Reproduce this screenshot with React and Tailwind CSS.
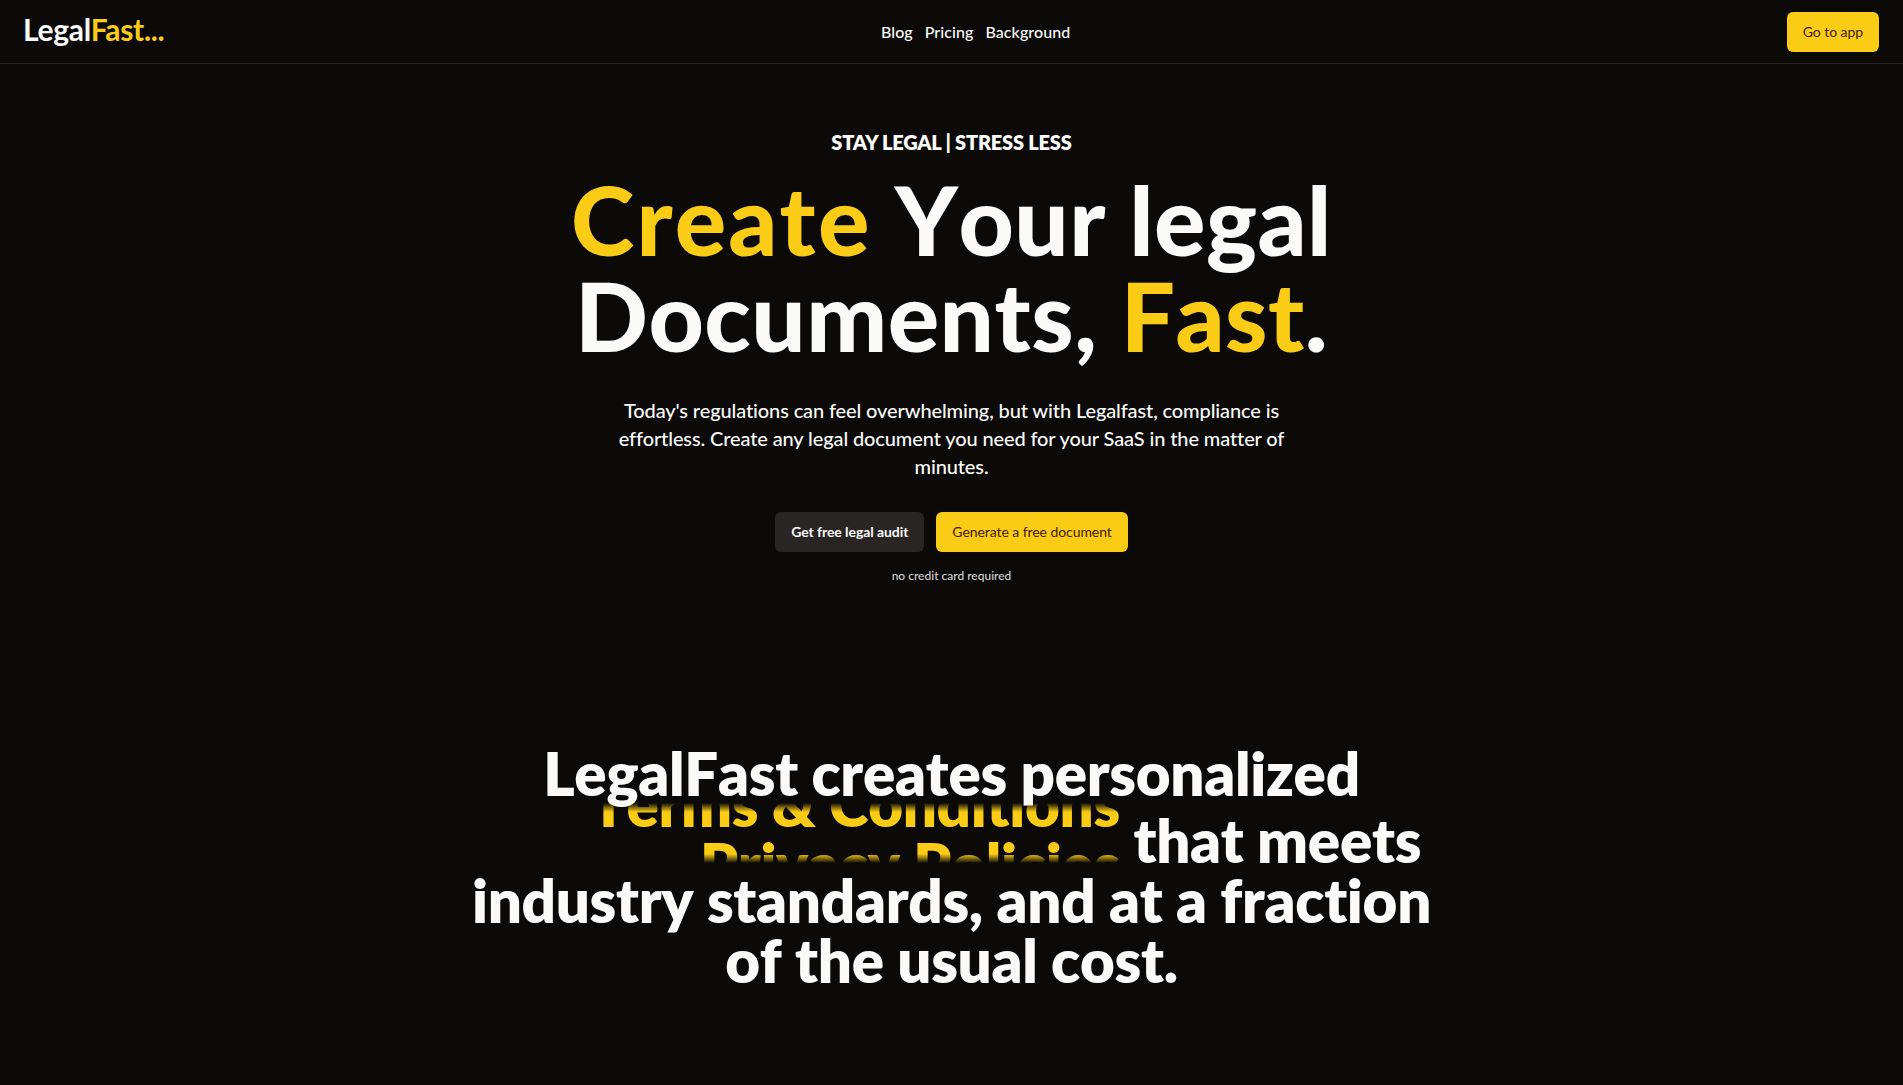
export default function App() {
  return (
    <div className="min-h-screen bg-[#0c0a09] text-[#fafaf9] font-['Lato','Noto_Sans',sans-serif] [font-variant-ligatures:none]">
      <header className="flex h-16 items-center justify-between border-b border-[#292524] pl-[23px] pr-6">
        <a className="-mt-1.5 text-3xl leading-8 font-bold tracking-[-0.01em]">
          Legal<span className="text-[#facc15]">Fast...</span>
        </a>
        <nav className="flex items-center gap-3 text-base font-medium tracking-[0.005em] text-[#fafaf9]">
          <a>Blog</a>
          <a>Pricing</a>
          <a>Background</a>
        </nav>
        <button className="h-10 rounded-md bg-[#facc15] px-4 text-sm font-normal tracking-[-0.005em] text-[#422006]">Go to app</button>
      </header>

      <main>
        <section className="flex flex-col items-center pt-16 text-center">
          <p className="text-xl font-extrabold tracking-[-0.01em]">STAY LEGAL | STRESS LESS</p>
          <h1 className="mt-[15px] text-8xl font-black tracking-[0.005em] [font-kerning:none]">
            <span className="tracking-[0.022em] text-[#facc15]">Create</span> Your legal
            <br />
            Documents, <span className="text-[#facc15]">Fast</span>.
          </h1>
          <p className="mt-[33px] max-w-2xl text-xl font-medium tracking-[-0.006em]">
            Today's regulations can feel overwhelming, but with Legalfast, compliance is effortless. Create any legal document you need for your SaaS in the matter of minutes.
          </p>
          <div className="mt-8 flex gap-3">
            <button className="h-10 rounded-md bg-[#292524] px-4 text-sm font-bold tracking-[-0.005em] text-[#fafaf9]">Get free legal audit</button>
            <button className="h-10 rounded-md bg-[#facc15] px-4 text-sm font-normal tracking-[-0.005em] text-[#422006]">Generate a free document</button>
          </div>
          <p className="mt-4 text-xs font-medium text-[#d6d3d1]">no credit card required</p>
        </section>

        <section className="mx-auto mt-[159px] max-w-5xl text-center text-6xl font-extrabold tracking-[-0.005em] [font-kerning:none]">
          LegalFast creates personalized{" "}
          <span className="inline-block h-[60px] w-[638px] overflow-hidden text-right text-[#facc15] [mask-image:linear-gradient(to_bottom,transparent,black_15%,black_85%,transparent)]">
            <span className="flex -translate-y-[29px] flex-col items-end">
              <span>Terms &amp; Conditions</span>
              <span>Privacy Policies</span>
            </span>
          </span>{" "}
          that meets industry standards, and at a fraction of the usual cost.
        </section>
      </main>
    </div>
  );
}
